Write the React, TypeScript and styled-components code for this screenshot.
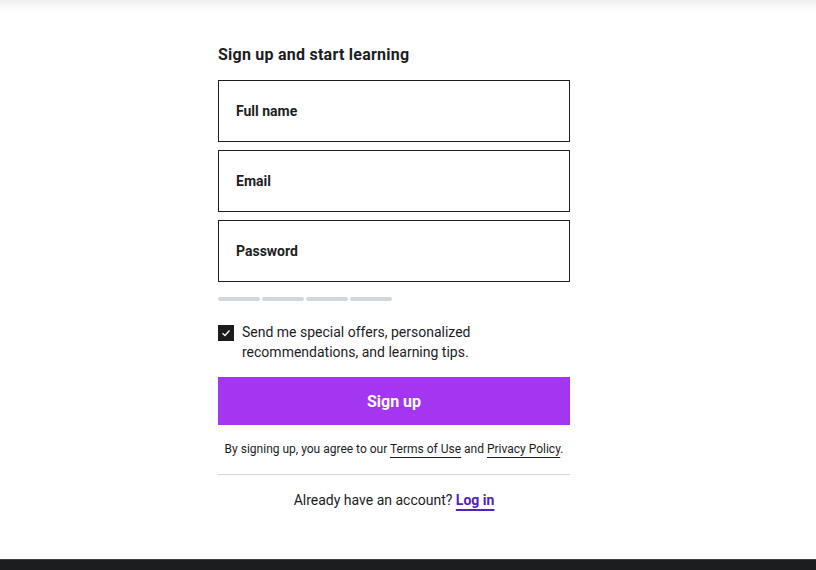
import React from "react";
import styled, { createGlobalStyle } from "styled-components";

const Global = createGlobalStyle`
  html, body { margin: 0; padding: 0; background: #fff; }
  body { font-family: Roboto, "Noto Sans", sans-serif; color: #1c1d1f; }
  * { box-sizing: border-box; }
`;

const Page = styled.div`
  display: flex;
  flex-direction: column;
  height: 570px;
  overflow: hidden;
`;

const HeaderShadow = styled.div`
  height: 14px;
  flex: none;
  background: linear-gradient(to bottom, rgba(0,0,0,0.07), rgba(0,0,0,0.02) 50%, rgba(0,0,0,0));
`;

const Main = styled.main`
  flex: 1;
  display: flex;
  padding-left: 218px;
  padding-top: 31px;
`;

const Form = styled.form`
  width: 352px;
  display: flex;
  flex-direction: column;
`;

const Heading = styled.h2`
  margin: 0 0 16px;
  font-size: 16px;
  line-height: 19px;
  font-weight: 700;
  letter-spacing: 0.24px;
`;

const Field = styled.label`
  height: 62px;
  border: 1px solid #1c1d1f;
  display: flex;
  align-items: center;
  padding-left: 17px;
  margin-bottom: 8px;
  font-size: 14px;
  font-weight: 700;
`;

const Strength = styled.div`
  display: flex;
  gap: 2px;
  margin-top: 7px;
`;

const Bar = styled.span`
  width: 42px;
  height: 4px;
  border-radius: 2px;
  background: #d1d7dc;
`;

const CheckRow = styled.div`
  display: flex;
  gap: 8px;
  margin-top: 21px;
  font-size: 14px;
  line-height: 20px;
`;

const Box = styled.span`
  width: 16px;
  height: 16px;
  margin-top: 3px;
  flex: none;
  background: #1c1d1f;
  display: flex;
  align-items: center;
  justify-content: center;
`;

const Button = styled.button`
  margin-top: 15px;
  height: 48px;
  border: 0;
  background: #a435f0;
  color: #fff;
  font-family: inherit;
  font-size: 16px;
  font-weight: 700;
`;

const Terms = styled.p`
  margin: 16px 0 0;
  text-align: center;
  font-size: 12px;
  line-height: 16px;
  padding-bottom: 17px;
  border-bottom: 1px solid #d1d7dc;
`;

const TermsLink = styled.a`
  color: #1c1d1f;
  text-decoration: underline;
  text-underline-offset: 4px;
`;

const Login = styled.p`
  margin: 15px 0 0;
  text-align: center;
  font-size: 14px;
  line-height: 20px;
`;

const LoginLink = styled.a`
  color: #5022c3;
  font-weight: 700;
  text-decoration: underline;
  text-decoration-thickness: 2px;
  text-underline-offset: 4px;
`;

const Footer = styled.footer`
  height: 11px;
  flex: none;
  background: #1c1d1f;
  border-top: 1px solid #3e4143;
`;

export default function App() {
  return (
    <Page>
      <Global />
      <HeaderShadow />
      <Main>
        <Form onSubmit={(e) => e.preventDefault()}>
          <Heading>Sign up and start learning</Heading>
          <Field>Full name</Field>
          <Field>Email</Field>
          <Field>Password</Field>
          <Strength>
            <Bar />
            <Bar />
            <Bar />
            <Bar />
          </Strength>
          <CheckRow>
            <Box>
              <svg width="10" height="10" viewBox="0 0 10 10">
                <path d="M1.5 5.2 L4 7.5 L8.5 2.5" fill="none" stroke="#fff" strokeWidth="1.3" />
              </svg>
            </Box>
            <span>
              Send me special offers, personalized
              <br />
              recommendations, and learning tips.
            </span>
          </CheckRow>
          <Button type="submit">Sign up</Button>
          <Terms>
            By signing up, you agree to our <TermsLink>Terms of Use</TermsLink> and{" "}
            <TermsLink>Privacy Policy</TermsLink>.
          </Terms>
          <Login>
            Already have an account? <LoginLink>Log in</LoginLink>
          </Login>
        </Form>
      </Main>
      <Footer />
    </Page>
  );
}
